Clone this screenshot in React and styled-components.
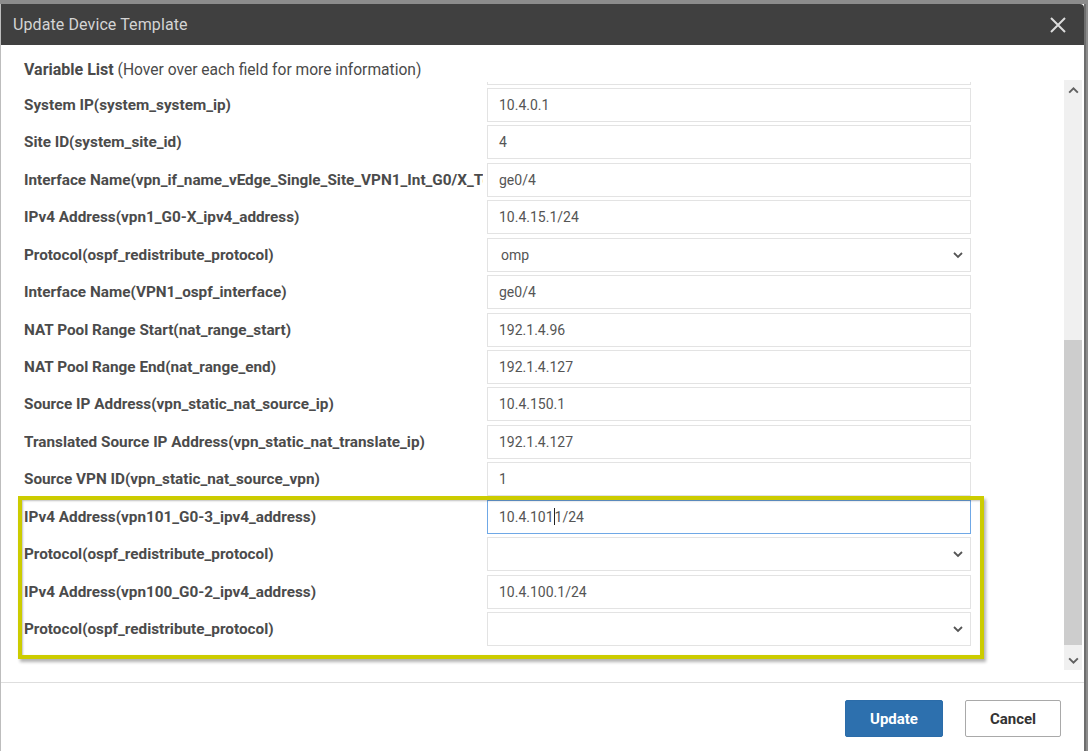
import React from "react";
import styled, { createGlobalStyle } from "styled-components";

const GlobalStyle = createGlobalStyle`
  html, body {
    margin: 0;
    padding: 0;
    background: #8c8c8c;
    font-family: Roboto, "Liberation Sans", Arial, sans-serif;
    overflow: hidden;
  }
  * { box-sizing: border-box; }
`;

const Dialog = styled.div`
  margin-top: 4px;
  width: 1086px;
  height: 747px;
  background: #fff;
  border-left: 1px solid #bdbdbd;
  border-right: 2px solid #6e6e6e;
  display: flex;
  flex-direction: column;
`;

const Header = styled.div`
  height: 41px;
  flex: none;
  background: #404040;
  border-top-right-radius: 4px;
  display: flex;
  align-items: center;
  justify-content: space-between;
  padding: 0 14px 0 12px;
`;

const Title = styled.div`
  color: #d4d4d4;
  font-size: 16px;
  letter-spacing: 0.1px;
`;

const CloseButton = styled.div`
  width: 24px;
  height: 24px;
  display: flex;
  align-items: center;
  justify-content: center;
`;

const Body = styled.div`
  flex: none;
  height: 637px;
  display: flex;
`;

const Main = styled.div`
  flex: 1;
  display: flex;
  flex-direction: column;
  min-width: 0;
`;

const Heading = styled.div`
  height: 37px;
  flex: none;
  padding: 14px 0 0 23px;
  font-size: 15.6px;
  line-height: 22px;
  color: #4a4a4a;

  b {
    font-size: 16px;
    font-weight: 700;
  }
`;

const Viewport = styled.div`
  flex: 1;
  overflow: hidden;
`;

const List = styled.div`
  margin-top: -31.4px;
  padding-left: 23px;
  width: 970px;
  display: flex;
  flex-direction: column;
  gap: 3.43px;
`;

const Highlight = styled.div`
  position: relative;
  display: flex;
  flex-direction: column;
  gap: 3.43px;

  &::after {
    content: "";
    position: absolute;
    top: -4px;
    left: -6px;
    right: -13px;
    bottom: -13px;
    border: 4px solid #cccc00;
    box-shadow: 2px 3px 3px rgba(0, 0, 0, 0.3), inset 1px 1px 2px rgba(0, 0, 0, 0.25);
    pointer-events: none;
  }
`;

const Row = styled.div`
  display: flex;
  align-items: center;
  height: 34px;
  gap: 4px;
`;

const Label = styled.div`
  width: 459px;
  flex: none;
  overflow: hidden;
  white-space: nowrap;
  font-size: 15.3px;
  font-weight: 700;
  color: #4b4b4b;
`;

const Field = styled.div`
  flex: 1;
  height: 34px;
  display: flex;
  align-items: center;
  justify-content: space-between;
  padding: 0 6px 0 ${(p) => (p.$select ? "13px" : "11px")};
  border: 1px solid ${(p) => (p.$focused ? "#6fa8e6" : "#e3e3e3")};
  background: #fff;
  font-size: 14px;
  color: #555;
`;

const Caret = styled.span`
  display: inline-block;
  width: 1px;
  height: 17px;
  background: #222;
  vertical-align: -3px;
`;

const Scrollbar = styled.div`
  width: 18px;
  flex: none;
  margin: 35px 2px 0 0;
  height: 590px;
  background: #f0f0f0;
  display: flex;
  flex-direction: column;
`;

const ScrollArrow = styled.div`
  height: 20px;
  flex: none;
  display: flex;
  align-items: center;
  justify-content: center;
`;

const ScrollTrack = styled.div`
  flex: 1;
  display: flex;
  flex-direction: column;
  justify-content: flex-end;
  padding-bottom: 5px;
`;

const ScrollThumb = styled.div`
  height: 305px;
  background: #cdcdcd;
`;

const Footer = styled.div`
  flex: 1;
  border-top: 1px solid #dedede;
  display: flex;
  justify-content: flex-end;
  align-items: flex-start;
  gap: 22px;
  padding: 17px 23px 0 0;
`;

const Button = styled.button`
  height: 37px;
  width: ${(p) => (p.$primary ? "98px" : "96px")};
  border-radius: 2px;
  border: 1px solid ${(p) => (p.$primary ? "#2b6ca9" : "#a9a9a9")};
  background: ${(p) => (p.$primary ? "#2d70ae" : "#fff")};
  color: ${(p) => (p.$primary ? "#fff" : "#333")};
  font-family: Roboto, "Liberation Sans", Arial, sans-serif;
  font-size: 15px;
  font-weight: 700;
`;

const Chevron = ({ up, size = 12, color = "#555" }) => (
  <svg width={size} height={size} viewBox="0 0 12 12">
    <path
      d={up ? "M2 8 L6 4 L10 8" : "M2 4 L6 8 L10 4"}
      fill="none"
      stroke={color}
      strokeWidth="1.8"
    />
  </svg>
);

const rows = [
  { label: "", value: "" },
  { label: "System IP(system_system_ip)", value: "10.4.0.1" },
  { label: "Site ID(system_site_id)", value: "4" },
  {
    label: "Interface Name(vpn_if_name_vEdge_Single_Site_VPN1_Int_G0/X_TenGigabit)",
    value: "ge0/4",
  },
  { label: "IPv4 Address(vpn1_G0-X_ipv4_address)", value: "10.4.15.1/24" },
  { label: "Protocol(ospf_redistribute_protocol)", value: "omp", select: true },
  { label: "Interface Name(VPN1_ospf_interface)", value: "ge0/4" },
  { label: "NAT Pool Range Start(nat_range_start)", value: "192.1.4.96" },
  { label: "NAT Pool Range End(nat_range_end)", value: "192.1.4.127" },
  { label: "Source IP Address(vpn_static_nat_source_ip)", value: "10.4.150.1" },
  {
    label: "Translated Source IP Address(vpn_static_nat_translate_ip)",
    value: "192.1.4.127",
  },
  { label: "Source VPN ID(vpn_static_nat_source_vpn)", value: "1" },
];

const highlighted = [
  { label: "IPv4 Address(vpn101_G0-3_ipv4_address)", focused: true },
  { label: "Protocol(ospf_redistribute_protocol)", value: "", select: true },
  { label: "IPv4 Address(vpn100_G0-2_ipv4_address)", value: "10.4.100.1/24" },
  { label: "Protocol(ospf_redistribute_protocol)", value: "", select: true },
];

const VariableRow = ({ row }) => (
  <Row>
    <Label>{row.label}</Label>
    <Field $select={row.select} $focused={row.focused}>
      {row.focused ? (
        <span>
          10.4.101
          <Caret />
          1/24
        </span>
      ) : (
        <span>{row.value}</span>
      )}
      {row.select && <Chevron />}
    </Field>
  </Row>
);

export default function App() {
  return (
    <>
      <GlobalStyle />
      <Dialog>
        <Header>
          <Title>Update Device Template</Title>
          <CloseButton>
            <svg width="18" height="18" viewBox="0 0 18 18">
              <path d="M2 2 L16 16 M16 2 L2 16" stroke="#dcdcdc" strokeWidth="2" />
            </svg>
          </CloseButton>
        </Header>
        <Body>
          <Main>
            <Heading>
              <b>Variable List</b> (Hover over each field for more information)
            </Heading>
            <Viewport>
              <List>
                {rows.map((row, i) => (
                  <VariableRow key={i} row={row} />
                ))}
                <Highlight>
                  {highlighted.map((row, i) => (
                    <VariableRow key={i} row={row} />
                  ))}
                </Highlight>
              </List>
            </Viewport>
          </Main>
          <Scrollbar>
            <ScrollArrow>
              <Chevron up size={13} color="#606060" />
            </ScrollArrow>
            <ScrollTrack>
              <ScrollThumb />
            </ScrollTrack>
            <ScrollArrow>
              <Chevron size={13} color="#606060" />
            </ScrollArrow>
          </Scrollbar>
        </Body>
        <Footer>
          <Button $primary>Update</Button>
          <Button>Cancel</Button>
        </Footer>
      </Dialog>
    </>
  );
}
